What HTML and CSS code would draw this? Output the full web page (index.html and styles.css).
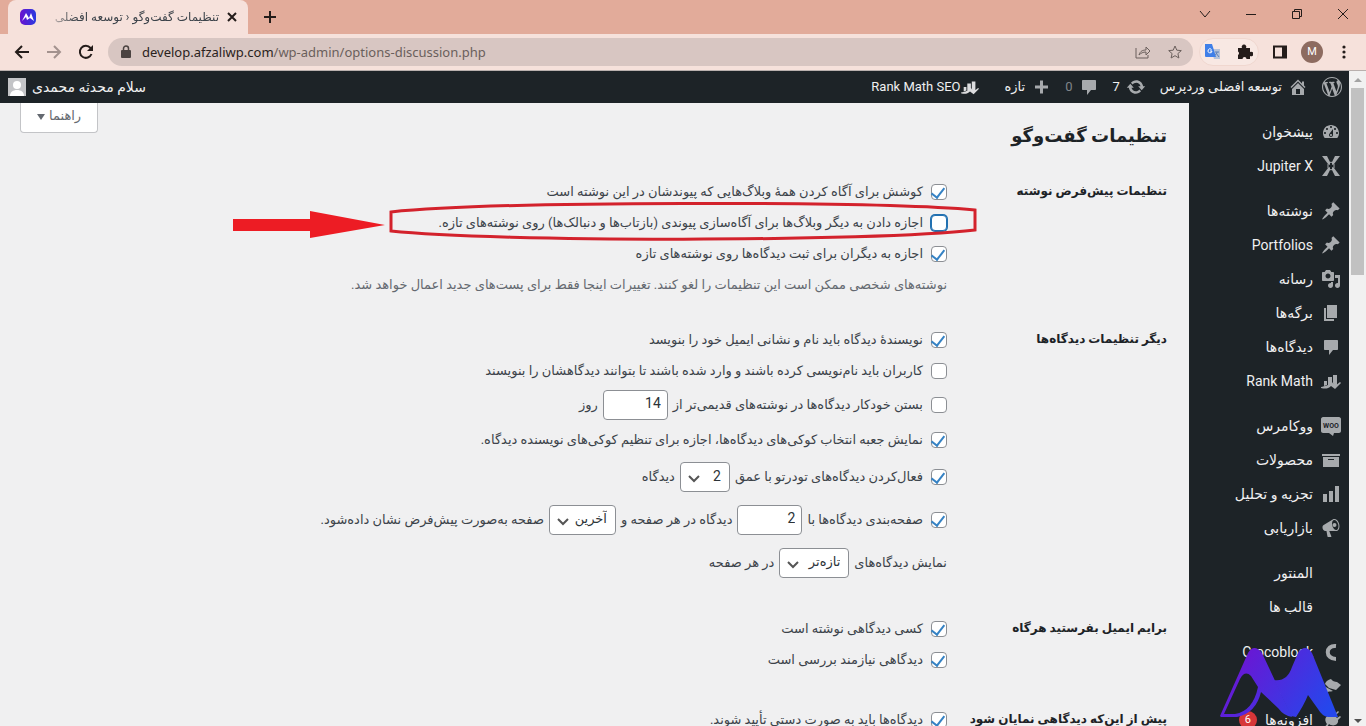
FILE: index.html
```html
<!DOCTYPE html>
<html lang="fa">
<head>
<meta charset="utf-8">
<title>تنظیمات گفت‌وگو ‹ توسعه افضلی</title>
<link rel="stylesheet" href="styles.css">
</head>
<body>
<svg class="symbols" aria-hidden="true">
  <symbol id="dashboard" viewBox="0 0 20 20"><path fill-rule="evenodd" d="M3.76 16h12.48c1.1-1.37 1.76-3.11 1.76-5 0-4.42-3.58-8-8-8s-8 3.58-8 8c0 1.89.66 3.63 1.76 5zM10 4c.55 0 1 .45 1 1s-.45 1-1 1-1-.45-1-1 .45-1 1-1zM6 6c.55 0 1 .45 1 1s-.45 1-1 1-1-.45-1-1 .45-1 1-1zm8 0c.55 0 1 .45 1 1s-.45 1-1 1-1-.45-1-1 .45-1 1-1zm-5.37 5.55L12 7v6c0 1.1-.9 2-2 2s-2-.9-2-2c0-.57.24-1.08.63-1.45zM4 10c.55 0 1 .45 1 1s-.45 1-1 1-1-.45-1-1 .45-1 1-1zm12 0c.55 0 1 .45 1 1s-.45 1-1 1-1-.45-1-1 .45-1 1-1zm-5 3c0-.55-.45-1-1-1s-1 .45-1 1 .45 1 1 1 1-.45 1-1z"/></symbol>
  <symbol id="jupiter" viewBox="0 0 20 20"><path d="M1 0h5l3 6v3L7 8zM19 0h-5l-3 6v3l2-1zM1 20h5l3-6v-3l-2 1zM19 20h-5l-3-6v-3l2 1z"/><path d="M7 8l3-2 3 2v4l-3 2-3-2z" fill="none" stroke="currentColor"/></symbol>
  <symbol id="pin" viewBox="0 0 20 20"><path d="M10.44 3.02l1.82-1.82 6.36 6.35-1.83 1.82c-1.05-.68-2.48-.57-3.41.36l-.75.75c-.92.93-1.04 2.35-.35 3.41l-1.83 1.82-2.41-2.41-2.8 2.79c-.42.42-3.38 2.71-3.8 2.29s1.86-3.39 2.28-3.81l2.79-2.79L4.1 9.36l1.83-1.82c1.05.69 2.48.57 3.4-.36l.75-.75c.93-.92 1.05-2.35.36-3.41z"/></symbol>
  <symbol id="media" viewBox="0 0 20 20"><path fill-rule="evenodd" d="M13 11V4c0-.55-.45-1-1-1h-1.67L9 1H5L3.67 3H2c-.55 0-1 .45-1 1v7c0 .55.45 1 1 1h10c.55 0 1-.45 1-1zM7 4.5c1.38 0 2.5 1.12 2.5 2.5S8.38 9.5 7 9.5 4.5 8.38 4.5 7 5.62 4.5 7 4.5zM14 6h5v10.5c0 1.38-1.12 2.5-2.5 2.5S14 17.88 14 16.5s1.12-2.5 2.5-2.5c.17 0 .34.02.5.05V9h-3V6zm-4 8.05V13h2v3.5c0 1.38-1.12 2.5-2.5 2.5S7 17.88 7 16.5 8.12 14 9.5 14c.17 0 .34.02.5.05z"/></symbol>
  <symbol id="pages" viewBox="0 0 20 20"><path d="M6 15V2h10v13H6zm-1 1h8v2H3V5h2v11z"/></symbol>
  <symbol id="comment" viewBox="0 0 20 20"><path d="M4 3h12c.6 0 1 .4 1 1v8c0 .6-.4 1-1 1h-4l-4 5v-5H4c-.6 0-1-.4-1-1V4c0-.6.4-1 1-1z"/></symbol>
  <symbol id="rank" viewBox="0 0 20 20"><path d="M3 10h3v4l-3 1zM7 6h4v5l-4 4zM12 4h4v10l-2 2-2-4zM0 16c4-1 7-1 11-5l3 4 5-4 1 1-6 6-4-3c-3 3-6 3-10 2z"/></symbol>
  <symbol id="archive" viewBox="0 0 20 20"><path fill-rule="evenodd" d="M19 4v2H1V4h18zM2 7h16v10H2V7zm11 3V9H7v1h6z"/></symbol>
  <symbol id="chart" viewBox="0 0 20 20"><path d="M18 18V2h-4v16h4zm-6 0V7H8v11h4zm-6 0v-8H2v8h4z"/></symbol>
  <symbol id="megaphone" viewBox="0 0 20 20"><path fill-rule="evenodd" d="M18.15 5.94c.46 1.62.38 3.22-.02 4.48-.42 1.28-1.26 2.18-2.3 2.48-.16.06-.26.06-.4.06-.06.02-.12.02-.18.02-.06.02-.14.02-.22.02h-6.8l2.22 5.5c.02.14-.06.26-.14.34-.08.1-.24.16-.34.16H6.95c-.1 0-.26-.06-.34-.16-.08-.08-.16-.2-.14-.34l-1-5.5H4.25l-.02-.02c-.5.06-1.08-.18-1.54-.62s-.88-1.08-1.06-1.88c-.24-.8-.2-1.56-.02-2.2.18-.62.58-1.08 1.06-1.3l.02-.02 9-5.4c.1-.06.18-.1.24-.16.06-.04.14-.08.24-.12.16-.08.28-.12.5-.18 1.04-.3 2.24.1 3.22.98s1.84 2.24 2.26 3.86zm-2.58 5.98h-.02c.4-.1.74-.34 1.04-.7.58-.7.86-1.76.86-3.04 0-.64-.1-1.3-.28-1.98-.34-1.36-1.02-2.5-1.78-3.24s-1.68-1.1-2.46-.88c-.82.22-1.4.96-1.7 2-.32 1.04-.28 2.36.06 3.72.38 1.36 1 2.5 1.8 3.24.78.74 1.62 1.1 2.48.88z"/><circle cx="13.500" cy="7" r="2"/></symbol>
  <symbol id="croco" viewBox="0 0 20 20"><path d="M15 4C4 3 4 17 15 17" fill="none" stroke="currentColor" stroke-width="4"/></symbol>
  <symbol id="brush" viewBox="0 0 20 20"><path d="M4 8c1-3 3-4 6-5 1 2 4 3 6 3l4 3-5 5-7-2zM3 10l9 5c-3 1-4 0-5 1-2 1-5 1-6 0 2-1 0-4 2-6z"/></symbol>
  <symbol id="plug" viewBox="0 0 20 20"><path d="M13 5l4-4 1 1-4 4 2 2 3-2 1 1-3 3c1 5-5 7-9 4l-3 5-2-1 3-4C3 10 4 6 9 5z"/></symbol>
  <symbol id="home" viewBox="0 0 20 20"><path fill-rule="evenodd" d="M16 8.5l1.53 1.53-1.06 1.06L10 4.6l-6.47 6.49-1.06-1.06L10 2.5l4 4v-2h2v4zm-6-2.46l6 5.99V18H4v-5.97zM12 17v-5H8v5h4z"/></symbol>
  <symbol id="update" viewBox="0 0 20 20"><path d="M10.2 3.28c3.53 0 6.43 2.61 6.92 6h2.08l-3.5 4-3.5-4h2.32c-.45-1.97-2.21-3.45-4.32-3.45-1.45 0-2.73.71-3.54 1.78L4.95 5.66C6.23 4.2 8.11 3.28 10.2 3.28zm-.4 13.44c-3.52 0-6.43-2.61-6.92-6H.8l3.5-4 3.5 4H5.48c.45 1.97 2.21 3.45 4.32 3.45 1.45 0 2.73-.71 3.54-1.78l1.71 1.95c-1.28 1.46-3.15 2.38-5.25 2.38z"/></symbol>
  <symbol id="plus" viewBox="0 0 20 20"><path d="M17 8.500h-5v-5H9v5H4v3h5v5h3v-5h5z"/></symbol>
  <symbol id="wordpress" viewBox="0 0 20 20"><path fill-rule="evenodd" d="M20 10c0-5.51-4.49-10-10-10C4.48 0 0 4.49 0 10c0 5.52 4.48 10 10 10 5.51 0 10-4.48 10-10zM7.78 15.37L4.37 6.22c.55-.02 1.17-.08 1.17-.08.5-.06.44-1.13-.06-1.11 0 0-1.45.11-2.37.11-.18 0-.37 0-.58-.01C4.12 2.69 6.87 1.11 10 1.11c2.33 0 4.45.87 6.05 2.34-.68-.11-1.65.39-1.65 1.58 0 .74.45 1.36.9 2.1.35.61.55 1.36.55 2.46 0 1.49-1.4 5-1.4 5l-3.03-8.37c.54-.02.82-.17.82-.17.5-.05.44-1.25-.06-1.22 0 0-1.44.12-2.38.12-.87 0-2.33-.12-2.33-.12-.5-.03-.56 1.2-.06 1.22l.92.08 1.26 3.41zM17.41 10c.24-.64.74-1.87.43-4.25.7 1.29 1.05 2.71 1.05 4.25 0 3.29-1.73 6.24-4.4 7.78.97-2.59 1.94-5.2 2.92-7.78zM6.1 18.09C3.12 16.65 1.11 13.53 1.11 10c0-1.3.23-2.48.72-3.59C3.25 10.3 4.67 14.2 6.1 18.09zm4.03-6.63l2.58 6.98c-.86.29-1.76.45-2.71.45-.79 0-1.57-.11-2.29-.33.81-2.38 1.62-4.74 2.42-7.1z"/></symbol>
</svg>

<header class="browser">
  <div class="tab-strip">
    <div class="tab">
      <svg class="favicon" viewBox="0 0 16 16"><defs><linearGradient id="fav" x1="0" x2="1"><stop offset="0" stop-color="#6a12cf"/><stop offset="1" stop-color="#2a3ae0"/></linearGradient></defs><rect width="16" height="16" rx="5" fill="url(#fav)"/><path d="M2 12L6 4l3 5 2-5 3 8-4-3-3 2-1-3z" fill="#fff"/></svg>
      <span class="tab-title" dir="rtl">تنظیمات گفت‌وگو ‹ توسعه افضلی</span>
      <button class="bare" aria-label="Close tab"><svg class="x-icon" viewBox="0 0 10 10"><path d="M1 1l8 8M9 1L1 9"/></svg></button>
    </div>
    <button class="bare new-tab" aria-label="New tab"><svg viewBox="0 0 14 14"><path d="M7 1v12M1 7h12"/></svg></button>
    <div class="window-buttons">
      <button class="bare" aria-label="Search tabs"><svg viewBox="0 0 12 12"><path d="M1 3l5 6 5-6"/></svg></button>
      <button class="bare" aria-label="Minimize"><svg viewBox="0 0 12 12"><path d="M1 6.500h10"/></svg></button>
      <button class="bare" aria-label="Restore"><svg viewBox="0 0 12 12"><path d="M1.500 3.500h7v7h-7zM3.500 3.500v-2h7v7h-2"/></svg></button>
      <button class="bare" aria-label="Close"><svg viewBox="0 0 12 12"><path d="M1 1l10 10M11 1L1 11"/></svg></button>
    </div>
  </div>
  <div class="toolbar">
    <div class="nav-buttons">
      <button class="bare" aria-label="Back"><svg viewBox="0 0 16 16"><path d="M15 8H2M8 2L2 8l6 6"/></svg></button>
      <button class="bare dim" aria-label="Forward"><svg viewBox="0 0 16 16"><path d="M1 8h13M8 2l6 6-6 6"/></svg></button>
      <button class="bare" aria-label="Reload"><svg viewBox="0 0 16 16"><path d="M13.500 10a6 6 0 1 1-1-6l1.500 2"/><path d="M15 1v6H9z" fill="currentColor" stroke="none"/></svg></button>
    </div>
    <div class="address">
      <svg class="lock" viewBox="0 0 10 14"><rect x="0" y="5" width="10" height="8" rx="1" fill="currentColor"/><path d="M2.500 6V3.500a2.500 2.500 0 0 1 5 0V6" fill="none" stroke="currentColor" stroke-width="1.500"/></svg>
      <span class="url">develop.afzaliwp.com<span class="path">/wp-admin/options-discussion.php</span></span>
      <button class="bare thin" aria-label="Share"><svg viewBox="0 0 16 16"><path d="M1 4v10h12v-3M4 11c1-4 4-5 7-5V3l4 4-4 4V8c-3 0-5 1-7 3z"/></svg></button>
      <button class="bare thin" aria-label="Bookmark"><svg viewBox="0 0 16 16"><path d="M8 2l1.800 4.200 4.500.4-3.400 3 1 4.400L8 11.700 4.100 14l1-4.400-3.400-3 4.500-.4z"/></svg></button>
    </div>
    <div class="extensions">
      <button class="bare" aria-label="Translate"><svg viewBox="0 0 16 16"><path d="M6 5h9v10H9z" fill="#b6c3d9" stroke="none"/><path d="M0 0h7l4 13H1c-1 0-1-1-1-1z" fill="#3f7fe8" stroke="none"/><path d="M10 8h4M12 8c0 2-2 3-2 3M11 9l3 4" stroke="#5b7fb8" stroke-width="1"/><path d="M6.500 5.500A2 2 0 1 0 7 7H5" stroke="#fff" stroke-width="1"/></svg></button>
      <button class="bare" aria-label="Extensions"><svg viewBox="0 0 16 16"><path d="M1 4h4a2.300 2.300 0 1 1 4 0h4v4a2.300 2.300 0 1 1 0 4v3H9.500a2 2 0 0 0-4 0H1v-4a2 2 0 0 0 0-3.500z" fill="currentColor" stroke="none"/></svg></button>
    </div>
    <button class="bare" aria-label="Side panel"><svg viewBox="0 0 16 16"><path d="M2 2.500h12v11H2z"/><path d="M10 2h4v12h-4z" fill="currentColor" stroke="none"/></svg></button>
    <button class="avatar" aria-label="Profile">M</button>
    <button class="bare menu-button" aria-label="Menu"><svg viewBox="0 0 16 16"><g fill="currentColor" stroke="none"><circle cx="8" cy="3" r="1.600"/><circle cx="8" cy="8" r="1.600"/><circle cx="8" cy="13" r="1.600"/></g></svg></button>
  </div>
</header>

<div class="viewport">
  <div class="page" dir="rtl">
    <nav class="admin-bar">
      <a href="#" aria-label="WordPress"><svg class="icon"><use href="#wordpress"/></svg></a>
      <a href="#"><svg class="icon"><use href="#home"/></svg>توسعه افضلی وردپرس</a>
      <a href="#"><svg class="icon"><use href="#update"/></svg>7</a>
      <a href="#"><svg class="icon"><use href="#comment"/></svg><span class="faint">0</span></a>
      <a href="#"><svg class="icon"><use href="#plus"/></svg>تازه</a>
      <a href="#" class="seo"><svg class="icon"><use href="#rank"/></svg>Rank Math SEO</a>
      <a href="#" class="account">سلام محدثه محمدی<svg class="person" viewBox="0 0 18 18"><path d="M0 0h18v18H0z" fill="#c3c4c7"/><circle cx="9" cy="7" r="4" fill="#fff"/><path d="M2 18c0-4 3-6 7-6s7 2 7 6z" fill="#fff"/></svg></a>
    </nav>
    <div class="columns">
      <aside class="side-menu">
        <ul>
          <li><a href="#"><svg class="icon"><use href="#dashboard"/></svg>پیشخوان</a></li>
          <li><a href="#"><svg class="icon"><use href="#jupiter"/></svg>Jupiter X</a></li>
        </ul>
        <ul>
          <li><a href="#"><svg class="icon"><use href="#pin"/></svg>نوشته‌ها</a></li>
          <li><a href="#"><svg class="icon"><use href="#pin"/></svg>Portfolios</a></li>
          <li><a href="#"><svg class="icon"><use href="#media"/></svg>رسانه</a></li>
          <li><a href="#"><svg class="icon"><use href="#pages"/></svg>برگه‌ها</a></li>
          <li><a href="#"><svg class="icon"><use href="#comment"/></svg>دیدگاه‌ها</a></li>
          <li><a href="#"><svg class="icon"><use href="#rank"/></svg>Rank Math</a></li>
        </ul>
        <ul>
          <li><a href="#"><svg class="icon" viewBox="0 0 20 20"><path d="M2 1h16c1 0 2 1 2 2v12c0 1-1 2-2 2h-5l-1 3-4-3H2c-1 0-2-1-2-2V3c0-1 1-2 2-2z"/><text class="woo-text" x="10" y="12" text-anchor="middle">WOO</text></svg>ووکامرس</a></li>
          <li><a href="#"><svg class="icon"><use href="#archive"/></svg>محصولات</a></li>
          <li><a href="#"><svg class="icon"><use href="#chart"/></svg>تجزیه و تحلیل</a></li>
          <li><a href="#"><svg class="icon"><use href="#megaphone"/></svg>بازاریابی</a></li>
        </ul>
        <ul>
          <li><a href="#"><span class="icon"></span>المنتور</a></li>
          <li><a href="#"><span class="icon"></span>قالب ها</a></li>
        </ul>
        <ul>
          <li><a href="#"><svg class="icon"><use href="#croco"/></svg>Crocoblock</a></li>
          <li><a href="#"><svg class="icon"><use href="#brush"/></svg>نمایش</a></li>
          <li><a href="#"><svg class="icon"><use href="#plug"/></svg>افزونه‌ها<span class="count">6</span></a></li>
        </ul>
      </aside>
      <main class="content">
        <button class="help-tab">راهنما <span class="caret"></span></button>
        <h1>تنظیمات گفت‌وگو</h1>
        <form>
          <section>
            <h2>تنظیمات پیش‌فرض نوشته</h2>
            <div class="options">
              <div class="line"><input type="checkbox" id="ping" checked><label for="ping">کوشش برای آگاه کردن همهٔ وبلاگ‌هایی که پیوندشان در این نوشته است</label></div>
              <div class="line marked"><input type="checkbox" id="pingback" class="focused"><label for="pingback">اجازه دادن به دیگر وبلاگ‌ها برای آگاه‌سازی پیوندی (بازتاب‌ها و دنبالک‌ها) روی نوشته‌های تازه.</label>
                <svg class="callout" viewBox="0 0 744 40" aria-hidden="true"><path d="M0 17h77V9l75 14-75 13v-7H0z" fill="#ed1c24"/><path d="M158 10C260-1 640-1 742 8v20c-102 12-482 12-584 1z" fill="none" stroke="#d3222c" stroke-width="3"/></svg>
              </div>
              <div class="line"><input type="checkbox" id="allow" checked><label for="allow">اجازه به دیگران برای ثبت دیدگاه‌ها روی نوشته‌های تازه</label></div>
              <p class="line note">نوشته‌های شخصی ممکن است این تنظیمات را لغو کنند. تغییرات اینجا فقط برای پست‌های جدید اعمال خواهد شد.</p>
            </div>
          </section>
          <section class="roomy">
            <h2>دیگر تنظیمات دیدگاه‌ها</h2>
            <div class="options">
              <div class="line"><input type="checkbox" id="name" checked><label for="name">نویسندهٔ دیدگاه باید نام و نشانی ایمیل خود را بنویسد</label></div>
              <div class="line"><input type="checkbox" id="member"><label for="member">کاربران باید نام‌نویسی کرده باشند و وارد شده باشند تا بتوانند دیدگاهشان را بنویسند</label></div>
              <div class="line medium"><input type="checkbox" id="close"><label for="close">بستن خودکار دیدگاه‌ها در نوشته‌های قدیمی‌تر از</label><input type="text" class="number" aria-label="روز" value="14"><span>روز</span></div>
              <div class="line"><input type="checkbox" id="cookies" checked><label for="cookies">نمایش جعبه انتخاب کوکی‌های دیدگاه‌ها، اجازه برای تنظیم کوکی‌های نویسنده دیدگاه.</label></div>
              <div class="line tall"><input type="checkbox" id="thread" checked><label for="thread">فعال‌کردن دیدگاه‌های تودرتو با عمق</label><select class="depth" aria-label="عمق"><option>2</option></select><span>دیدگاه</span></div>
              <div class="line tall"><input type="checkbox" id="paged" checked><label for="paged">صفحه‌بندی دیدگاه‌ها با</label><input type="text" class="number" aria-label="دیدگاه در هر صفحه" value="2"><span>دیدگاه در هر صفحه و</span><select class="which" aria-label="صفحه"><option>آخرین</option></select><span>صفحه به‌صورت پیش‌فرض نشان داده‌شود.</span></div>
              <div class="line tall"><label for="order">نمایش دیدگاه‌های</label><select class="order" id="order"><option>تازه‌تر</option></select><span>در هر صفحه</span></div>
            </div>
          </section>
          <section class="roomy">
            <h2>برایم ایمیل بفرستید هرگاه</h2>
            <div class="options">
              <div class="line"><input type="checkbox" id="mail1" checked><label for="mail1">کسی دیدگاهی نوشته است</label></div>
              <div class="line"><input type="checkbox" id="mail2" checked><label for="mail2">دیدگاهی نیازمند بررسی است</label></div>
            </div>
          </section>
          <section>
            <h2>پیش از این‌که دیدگاهی نمایان شود</h2>
            <div class="options">
              <div class="line"><input type="checkbox" id="manual" checked><label for="manual">دیدگاه‌ها باید به صورت دستی تأیید شوند.</label></div>
            </div>
          </section>
        </form>
      </main>
    </div>
  </div>
  <div class="scrollbar" aria-hidden="true">
    <span class="arrow up"></span>
    <span class="thumb"></span>
    <span class="arrow down"></span>
  </div>
  <svg class="watermark" viewBox="0 0 118 71" aria-hidden="true">
    <defs><linearGradient id="brand" gradientUnits="userSpaceOnUse" x1="20" y1="0" x2="110" y2="60"><stop offset="0" stop-color="#6e14d2"/><stop offset="1" stop-color="#2547ec"/></linearGradient></defs>
    <path fill="url(#brand)" fill-rule="evenodd" d="M0 69L28 6Q34-4 42 6L72 70Q64 69 58 61L41 45Q36 66 17 70H1zM4 67H15Q33 64 38 40L31 29Q25 23 20 32z"/>
    <path fill="url(#brand)" d="M54 33Q67 35 72 20L78 6Q85-4 92 6L118 70H108Q102 69 98 62L88 48Q84 58 76 70L71 69z"/>
  </svg>
</div>
</body>
</html>
```
FILE: styles.css
```css
* { box-sizing: border-box; }
body {
  margin: 0;
  height: 100vh;
  display: flex;
  flex-direction: column;
  overflow: hidden;
  background: #f0f0f1;
  color: #3c434a;
  font: 13px/18px Roboto, "DejaVu Sans", sans-serif;
}
.symbols { position: absolute; width: 0; height: 0; }
a { color: inherit; text-decoration: none; }
ul { list-style: none; margin: 0; padding: 0; }

/* Browser chrome */
.bare {
  border: 0;
  padding: 0;
  background: none;
  color: #241c1a;
  display: flex;
  flex: none;
}
.bare svg { width: 16px; height: 16px; fill: none; stroke: currentColor; stroke-width: 2; }
.tab-strip { display: flex; align-items: flex-start; height: 34px; background: #e2ab9a; }
.tab {
  display: flex;
  align-items: center;
  gap: 8px;
  width: 240px;
  height: 34px;
  margin-left: 8px;
  padding: 0 11px 0 12px;
  border-radius: 8px 8px 0 0;
  background: #f6e1db;
}
.favicon { width: 16px; height: 16px; flex: none; }
.tab-title {
  flex: 1;
  font-size: 12px;
  white-space: nowrap;
  overflow: hidden;
  mask-image: linear-gradient(to right, transparent, #000 32px);
}
.tab .x-icon { width: 10px; height: 10px; }
.new-tab { margin: 10px 0 0 15px; }
.new-tab svg { width: 14px; height: 14px; }
.window-buttons { display: flex; gap: 34px; margin: 8px 17px 0 auto; }
.window-buttons svg { width: 12px; height: 12px; stroke-width: 1; }
.toolbar {
  display: flex;
  align-items: center;
  gap: 10px;
  height: 37px;
  padding: 0 14px;
  background: #f6e1db;
  border-bottom: 1px solid #b9b0ae;
}
.nav-buttons { display: flex; gap: 16px; margin-right: 4px; }
.dim { color: #a3928e; }
.address {
  flex: 1;
  display: flex;
  align-items: center;
  gap: 16px;
  height: 28px;
  padding: 0 10px 0 13px;
  border-radius: 14px;
  background: #d8c6c2;
}
.lock { width: 10px; height: 14px; color: #4b4341; }
.url { flex: 1; margin-left: -5px; font: 13px/20px "Noto Sans", sans-serif; color: #2a2220; }
.path, .thin { color: #6a5f5c; }
.address .thin svg { stroke-width: 1; }
.extensions {
  display: flex;
  gap: 16px;
  padding: 5px;
  margin: 0 3px 0 -4px;
  border: 1px solid #f0d7cf;
  border-radius: 14px;
  background: #f8e8e3;
}
.menu-button { margin-left: 3px; }
.avatar {
  width: 22px;
  height: 22px;
  margin-left: 3px;
  border: 0;
  border-radius: 50%;
  padding: 0;
  background: #8d6b60;
  color: #fff;
  font: 11px/22px Roboto, sans-serif;
}

/* Page */
.viewport { position: relative; flex: 1; min-height: 0; display: flex; }
.page { flex: 1; min-width: 0; display: flex; flex-direction: column; overflow: hidden; }
.icon { width: 20px; height: 20px; flex: none; fill: currentColor; color: #a7aaad; }
.woo-text { font: bold 7px Roboto, sans-serif; fill: #1d2327; }
.admin-bar {
  display: flex;
  align-items: center;
  gap: 14px;
  flex: none;
  height: 32px;
  padding: 0 7px 0 8px;
  background: #1d2327;
  color: #f0f0f1;
}
.admin-bar a { display: flex; align-items: center; gap: 6px; }
.admin-bar .seo { gap: 0; margin-right: 12px; }
.admin-bar .seo .icon { width: 18px; height: 18px; color: #dcdcde; }
.faint { color: #80858a; }
.admin-bar .account { margin-right: auto; font-size: 14px; }
.person { width: 18px; height: 18px; }
.columns { flex: 1; min-height: 0; display: flex; }
.side-menu {
  display: flex;
  flex-direction: column;
  gap: 11px;
  width: 160px;
  flex: none;
  padding-top: 12px;
  background: #1d2327;
  color: #f0f0f1;
  font-size: 14px;
}
.side-menu a { display: flex; align-items: center; gap: 8px; height: 34px; padding: 0 8px; }
.count {
  width: 18px;
  height: 18px;
  border-radius: 9px;
  background: #d63638;
  color: #fff;
  font-size: 11px;
  text-align: center;
}
.content { position: relative; flex: 1; min-width: 0; padding: 15px 22px 0 20px; }
.help-tab {
  position: absolute;
  top: 0;
  left: 20px;
  display: flex;
  align-items: center;
  gap: 4px;
  height: 30px;
  padding: 0 16px 4px;
  border: 1px solid #c3c4c7;
  border-top: 0;
  border-radius: 0 0 4px 4px;
  background: #fff;
  color: #646970;
  font: inherit;
}
.caret { border: 4px solid transparent; border-top: 6px solid #646970; border-bottom: 0; margin-top: 3px; }
h1 { margin: 0 0 22px; font-size: 18px; line-height: 36px; font-weight: 700; color: #1d2327; }
form { display: flex; flex-direction: column; gap: 24px; }
section { display: grid; grid-template-columns: 220px 1fr; }
.roomy { padding-bottom: 5px; }
h2 { margin: 0; font-size: 12px; line-height: 31px; font-weight: 700; color: #1d2327; white-space: nowrap; }
.line { display: flex; align-items: center; gap: 5px; min-height: 31px; margin: 0; white-space: nowrap; }
.medium { min-height: 38px; }
.tall { min-height: 43px; }
.note { color: #646970; }
.marked { position: relative; }
.callout { position: absolute; right: -30px; top: -5px; width: 744px; height: 40px; pointer-events: none; }
input[type="checkbox"] {
  appearance: none;
  width: 16px;
  height: 16px;
  flex: none;
  margin: 0 0 0 3px;
  border: 1px solid #8c8f94;
  border-radius: 4px;
  background: #fff;
}
input[type="checkbox"]:checked::before {
  content: "";
  display: block;
  width: 6px;
  height: 11px;
  margin: 0 4px;
  border: solid #3582c4;
  border-width: 0 2px 2px 0;
  transform: rotate(38deg);
}
input.focused { border-color: #2271b1; box-shadow: 0 0 0 1px #2271b1; }
.number, select {
  height: 30px;
  border: 1px solid #8c8f94;
  border-radius: 4px;
  background: #fff;
  color: #2c3338;
  font: 13px/20px Roboto, "DejaVu Sans", sans-serif;
}
.number { width: 65px; padding: 0 6px 4px; font-size: 14px; }
select {
  appearance: none;
  padding: 0 8px 2px 24px;
  background: #fff url("data:image/svg+xml,%3Csvg xmlns='http://www.w3.org/2000/svg' viewBox='0 0 12 12'%3E%3Cpath d='M1 4l5 5 5-5' fill='none' stroke='%23555' stroke-width='2'/%3E%3C/svg%3E") no-repeat 7px 9px / 12px 12px;
}
.depth { width: 50px; font-size: 14px; }
.which { width: 67px; }
.order { width: 70px; }

.scrollbar {
  display: flex;
  flex-direction: column;
  align-items: center;
  width: 17px;
  padding: 7px 0 3px;
  background: #f1f1f1;
}
.arrow { border: 4px solid transparent; }
.up { border-top: 0; border-bottom-color: #a3a3a3; }
.down { border-bottom: 0; border-top-color: #505050; margin-top: auto; }
.thumb { width: 13px; height: 187px; margin-top: 6px; background: #c1c1c1; }
.watermark { position: absolute; right: 28px; bottom: 8px; width: 118px; height: 71px; }
```
